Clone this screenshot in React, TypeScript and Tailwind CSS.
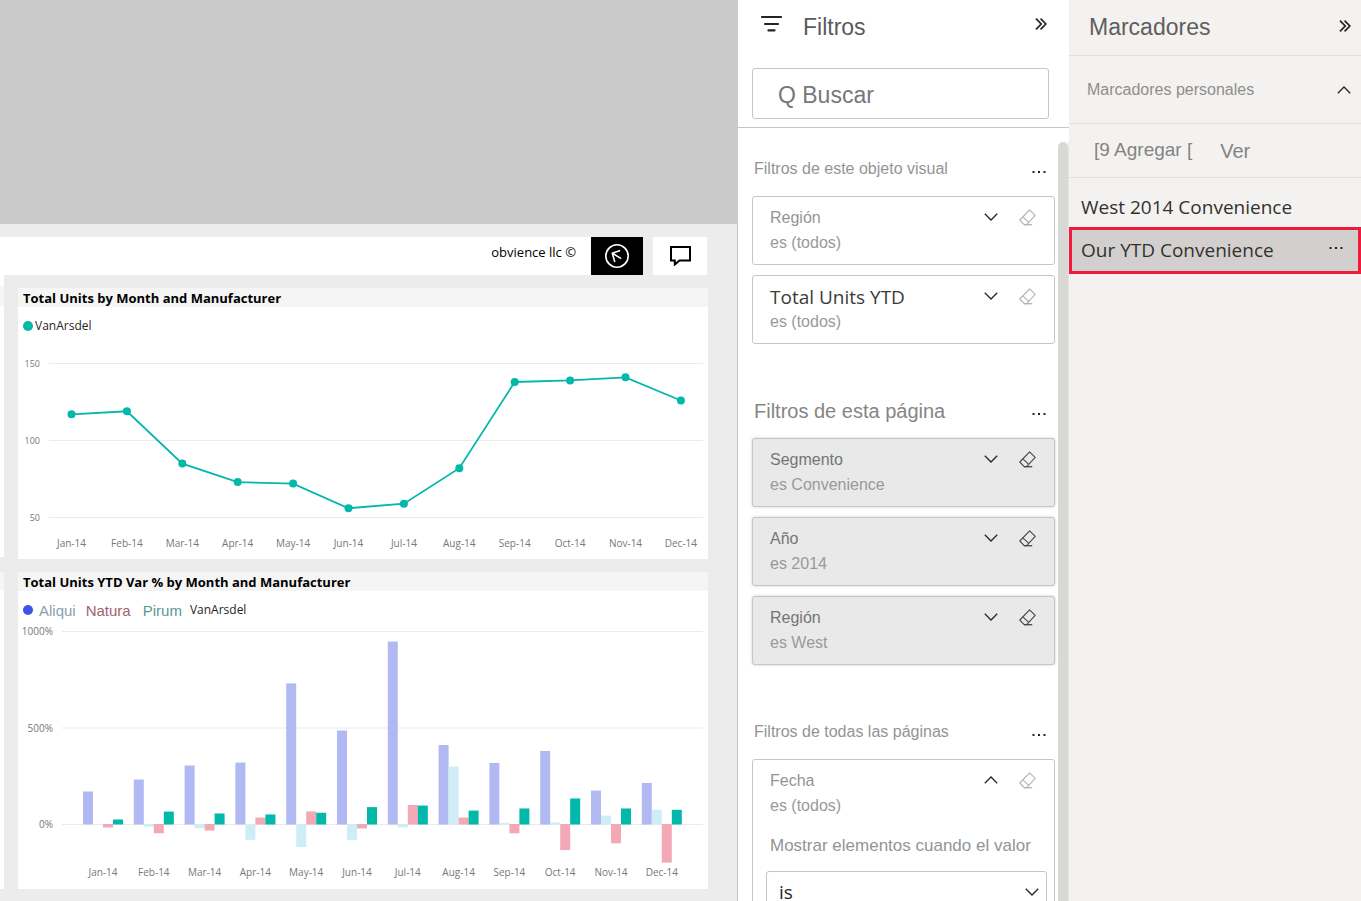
import React, { useState } from 'react';
import clsx from 'clsx';

const months = ['Jan', 'Feb', 'Mar', 'Apr', 'May', 'Jun', 'Jul', 'Aug', 'Sep', 'Oct', 'Nov', 'Dec'].map(m => `${m}-14`);

const totalUnits = [117, 119, 85, 73, 72, 56, 59, 82, 138, 139, 141, 126];

const series = [
  { name: 'Aliqui', color: '#b1b9f3', values: [171, 233, 306, 321, 731, 487, 948, 412, 319, 381, 176, 215] },
  { name: 'Pirum', color: '#cfedf7', values: [0, -14, -23, -82, -119, -82, -18, 300, 9, 11, 46, 76] },
  { name: 'Natura', color: '#f3a8b5', values: [-18, -48, -34, 36, 68, -23, 101, 36, -48, -135, -100, -200] },
  { name: 'VanArsdel', color: '#01b8aa', values: [26, 67, 57, 52, 61, 90, 98, 72, 83, 135, 83, 76] },
];

type IconProps = { className?: string };

function Chevron({ className }: IconProps) {
  return (
    <svg viewBox="0 0 14 8" className={clsx('h-2 w-3.5', className)} fill="none" stroke="currentColor" strokeWidth="1.3">
      <path d="M0.8 0.8 7 7 13.2 0.8" />
    </svg>
  );
}

function DoubleChevron() {
  return (
    <svg viewBox="0 0 12 12" className="h-3 w-3" fill="none" stroke="currentColor" strokeWidth="1.7">
      <path d="M1 0.6 6.2 6 1 11.4M5.6 0.6 10.8 6 5.6 11.4" />
    </svg>
  );
}

function Eraser() {
  return (
    <svg viewBox="0 0 17 17" className="h-[17px] w-[17px]" fill="none" stroke="currentColor" strokeWidth="1.1" strokeLinejoin="round">
      <path d="M10.6 0.8 16.2 6.4 7.6 15.6H5.2L0.8 11Z" />
      <path d="M3.8 7.8 9.8 13.4" />
      <path d="M5.2 15.7H13.2" strokeWidth="1.3" />
    </svg>
  );
}

function Dots({ label }: { label: string }) {
  return (
    <button aria-label={label} className="flex h-4 w-4 items-center justify-center text-[#252423]">
      <svg viewBox="0 0 14 4" className="h-1 w-3.5" fill="currentColor">
        <rect x="0.5" y="1" width="2" height="2" />
        <rect x="6" y="1" width="2" height="2" />
        <rect x="11.5" y="1" width="2" height="2" />
      </svg>
    </button>
  );
}

function LineChart() {
  const x = (i: number) => 53.5 + i * 55.4;
  const y = (v: number) => 177.5 - (v - 50) * 1.54;
  return (
    <svg viewBox="0 0 690 219" className="block w-full" role="img" aria-label="Total Units by Month">
      {[150, 100, 50].map(v => (
        <g key={v}>
          <line x1="31" x2="685" y1={y(v)} y2={y(v)} stroke="#eaeaea" />
          <text x="22" y={y(v) + 3.5} textAnchor="end" fontSize="9" fill="#777">{v}</text>
        </g>
      ))}
      <polyline points={totalUnits.map((v, i) => `${x(i)},${y(v)}`).join(' ')} fill="none" stroke="#01b8aa" strokeWidth="1.8" />
      {totalUnits.map((v, i) => (
        <circle key={months[i]} cx={x(i)} cy={y(v)} r="4" fill="#01b8aa" />
      ))}
      {months.map((m, i) => (
        <text key={m} x={x(i)} y="207" textAnchor="middle" fontSize="10" fill="#777">{m}</text>
      ))}
    </svg>
  );
}

function BarChart() {
  const x = (i: number) => 65 + i * 50.8;
  const y = (v: number) => 202.5 - v * 0.193;
  return (
    <svg viewBox="0 0 690 267" className="block w-full" role="img" aria-label="Total Units YTD Var % by Month">
      {[1000, 500, 0].map(v => (
        <g key={v}>
          <line x1="44" x2="685" y1={y(v)} y2={y(v)} stroke="#eaeaea" />
          <text x="35" y={y(v) + 3.5} textAnchor="end" fontSize="10" fill="#777">{v}%</text>
        </g>
      ))}
      {series.map((s, n) =>
        s.values.map((v, i) => (
          <rect key={s.name + i} x={x(i) + n * 10} y={Math.min(y(v), 202)} width="10" height={Math.abs(v) * 0.193} fill={s.color} />
        ))
      )}
      {months.map((m, i) => (
        <text key={m} x={x(i) + 20} y="254" textAnchor="middle" fontSize="10" fill="#777">{m}</text>
      ))}
    </svg>
  );
}

function Visual({ title, legend, children }: { title: string; legend: React.ReactNode; children: React.ReactNode }) {
  return (
    <section className="bg-white">
      <h2 className="h-[19px] bg-[#f5f5f5] pl-[5px] text-[13px] leading-5 font-bold text-black">{title}</h2>
      {legend}
      {children}
    </section>
  );
}

function Report() {
  return (
    <main className="flex min-w-0 flex-1 flex-col border-r border-[#c8c8c8] bg-[#ececec] font-['Open_Sans',sans-serif]">
      <div className="h-56 shrink-0 bg-[#cacaca]" />
      <div className="mt-[13px] mr-[30px] flex h-[38px] shrink-0">
        <div className="flex-1 bg-white pt-1 pr-[15px] text-right text-[13px] leading-[22px] text-black">obvience llc ©</div>
        <button aria-label="Atrás" className="flex w-[52px] items-center justify-center bg-black text-white">
          <svg viewBox="-13 -13 26 26" className="h-[26px] w-[26px]" fill="none" stroke="currentColor" strokeWidth="1.6">
            <circle r="11.2" />
            <path d="M3.2-5.6-4.7-2.8-2.2 6M-4.7-2.8 4.2 2.6" />
          </svg>
        </button>
        <button aria-label="Comentarios" className="ml-2.5 flex w-[54px] items-center justify-center bg-white text-black">
          <svg viewBox="0 0 21 20" className="h-5 w-[21px]" fill="none" stroke="currentColor" strokeWidth="2">
            <path d="M1 1H20V14.5H9.5L4.8 18.5V14.5H1Z" />
          </svg>
        </button>
      </div>
      <div className="flex">
        <div className="flex w-1 flex-col">
          <div className="h-[11px] bg-white" />
          <div className="h-5 bg-[#f5f5f5]" />
          <div className="h-[251px] bg-white" />
          <div className="mt-[15px] h-[18px] bg-[#f5f5f5]" />
          <div className="flex-1 bg-white" />
        </div>
        <div className="mr-[29px] ml-3.5 flex min-w-0 flex-1 flex-col gap-[13px] pt-[13px]">
          <Visual
            title="Total Units by Month and Manufacturer"
            legend={
              <div className="flex h-[33px] items-center gap-0.5 pt-1 pl-[5px] text-[12px] text-[#252423]">
                <span className="h-2.5 w-2.5 rounded-full bg-[#01b8aa]" />
                VanArsdel
              </div>
            }
          >
            <LineChart />
          </Visual>
          <Visual
            title="Total Units YTD Var % by Month and Manufacturer"
            legend={
              <div className="flex h-[31px] items-center pt-2.5 pl-[5px] font-['Liberation_Sans',Arial,sans-serif] text-[15px]">
                <span className="mr-1.5 mb-1 h-2.5 w-2.5 rounded-full bg-[#4153e6]" />
                <span className="mr-2.5 text-[#8ba0ad]">Aliqui</span>
                <span className="mr-3 text-[#a25f70]">Natura</span>
                <span className="mr-2 text-[#579892]">Pirum</span>
                <span className="mb-1 font-['Open_Sans',sans-serif] text-[12px] text-[#252423]">VanArsdel</span>
              </div>
            }
          >
            <BarChart />
          </Visual>
        </div>
      </div>
    </main>
  );
}

type CardProps = {
  name: string;
  value: string;
  applied?: boolean;
  large?: boolean;
  open?: boolean;
  children?: React.ReactNode;
};

function FilterCard({ name, value, applied, large, open, children }: CardProps) {
  return (
    <div
      className={clsx(
        'min-h-[69px] rounded-[3px] border border-[#c8c6c4] pt-[9px]',
        applied ? 'bg-[#e9e9e9] shadow-[0_0_3px_rgba(0,0,0,0.2)]' : 'bg-white'
      )}
    >
      <div className="flex h-6 items-center pr-[18px] pl-[17px]">
        <h3
          className={clsx(
            'flex-1',
            large && "font-['Open_Sans',sans-serif] text-[19px] text-[#3b3a39]",
            !large && (applied ? 'text-[#757575]' : 'text-[#949494]')
          )}
        >
          {name}
        </h3>
        <button aria-label={`Expandir ${name}`} className="pb-0.5 text-[#252423]">
          <Chevron className={open ? 'rotate-180' : undefined} />
        </button>
        <button aria-label={`Borrar ${name}`} className={clsx('ml-[21px] pb-0.5', applied ? 'text-[#484644]' : 'text-[#b5b3b1]')}>
          <Eraser />
        </button>
      </div>
      <p className="pl-[17px] leading-[26px] text-[#999]">{value}</p>
      {children}
    </div>
  );
}

function FilterSection({ title, large, children }: { title: string; large?: boolean; children: React.ReactNode }) {
  return (
    <section>
      <div className="flex h-[54px] items-center justify-between pr-2 pl-0.5">
        <h2 className={large ? 'text-[20px] text-[#858585]' : 'text-[#949494]'}>{title}</h2>
        <span className="pt-1.5">
          <Dots label={`Más opciones: ${title}`} />
        </span>
      </div>
      <div className="flex flex-col gap-2.5">{children}</div>
    </section>
  );
}

function Filters() {
  return (
    <aside className="flex w-[331px] shrink-0 flex-col bg-white text-[16px]">
      <header className="h-32 shrink-0 border-b border-[#c8c6c4] pr-5 pl-3.5">
        <div className="flex h-[68px] items-start pt-3">
          <svg viewBox="0 0 22 18" className="mt-[3px] ml-2 h-[18px] w-[22px]" stroke="#252423" strokeWidth="2.2" strokeLinecap="round">
            <path d="M2 2H21M5 9H18M8.5 15.4H14.5" />
          </svg>
          <h1 className="ml-[21px] flex-1 text-[23px] leading-[30px] text-[#5c5a5f]">Filtros</h1>
          <button aria-label="Contraer filtros" className="mt-1.5 mr-0.5 text-[#252423]">
            <DoubleChevron />
          </button>
        </div>
        <input
          type="text"
          aria-label="Buscar"
          placeholder="Q Buscar"
          className="h-[51px] w-full rounded-[3px] border border-[#c8c6c4] px-[25px] pt-1 text-[23px] outline-none placeholder:text-[#77777c]"
        />
      </header>
      <div className="flex min-h-0 flex-1 overflow-hidden pt-3.5">
        <div className="flex min-w-0 flex-1 flex-col gap-10 pr-[3px] pl-3.5">
          <FilterSection title="Filtros de este objeto visual">
            <FilterCard name="Región" value="es (todos)" />
            <FilterCard name="Total Units YTD" value="es (todos)" large />
          </FilterSection>
          <FilterSection title="Filtros de esta página" large>
            <FilterCard name="Segmento" value="es Convenience" applied />
            <FilterCard name="Año" value="es 2014" applied />
            <FilterCard name="Región" value="es West" applied />
          </FilterSection>
          <FilterSection title="Filtros de todas las páginas">
            <FilterCard name="Fecha" value="es (todos)" open>
              <label htmlFor="condition" className="block pt-3.5 pl-[17px] text-[17px] leading-[26px] text-[#949494]">
                Mostrar elementos cuando el valor
              </label>
              <div className="relative mx-[13px] mt-3 mr-[7px] mb-4">
                <select
                  id="condition"
                  className="h-[42px] w-full appearance-none rounded-[3px] border border-[#c8c6c4] bg-white pl-3 font-['Open_Sans',sans-serif] text-[19px] text-[#252423]"
                >
                  <option>is</option>
                </select>
                <Chevron className="pointer-events-none absolute top-[17px] right-2 text-[#252423]" />
              </div>
            </FilterCard>
          </FilterSection>
        </div>
        <div className="w-2.5 shrink-0 rounded-t-full bg-[#d8d8d7]" />
        <div className="w-px shrink-0 bg-[#e4e4e4]" />
      </div>
    </aside>
  );
}

const bookmarks = ['West 2014 Convenience', 'Our YTD Convenience'];

function Bookmarks() {
  const [selected, setSelected] = useState(1);

  return (
    <aside className="w-[292px] shrink-0 bg-[#f3f2f1]">
      <header className="flex h-14 items-center justify-between border-b border-[#e1dfdd] pr-2.5 pl-5">
        <h1 className="text-[23px] text-[#605e5c]">Marcadores</h1>
        <button aria-label="Contraer marcadores" className="pb-1 text-[#252423]">
          <DoubleChevron />
        </button>
      </header>
      <div className="flex h-[68px] items-center justify-between border-b border-[#e1dfdd] pr-2.5 pl-[18px]">
        <h2 className="text-[16px] text-[#8f8d8b]">Marcadores personales</h2>
        <button aria-label="Contraer" className="text-[#252423]">
          <Chevron className="rotate-180" />
        </button>
      </div>
      <div className="flex h-[54px] items-center gap-7 border-b border-[#e1dfdd] pl-[25px] text-[#858381]">
        <button className="text-[19px]">[9 Agregar [</button>
        <button className="text-[20px]">Ver</button>
      </div>
      <ul className="pt-[9px] font-['Open_Sans',sans-serif] text-[19px] text-[#323130]">
        {bookmarks.map((b, i) => (
          <li
            key={b}
            className={clsx('flex items-center', i === selected ? 'h-[47px] border-[3px] border-[#f01b3c] bg-[#d2d0ce] pr-3.5 pl-[9px]' : 'h-10 pl-3')}
          >
            <button onClick={() => setSelected(i)} className="flex-1 text-left">{b}</button>
            {i === selected && (
              <span className="pb-1.5">
                <Dots label={`Más opciones: ${b}`} />
              </span>
            )}
          </li>
        ))}
      </ul>
    </aside>
  );
}

export default function App() {
  return (
    <div className="flex h-screen overflow-hidden bg-white font-['Liberation_Sans',Arial,sans-serif]">
      <Report />
      <Filters />
      <Bookmarks />
    </div>
  );
}
